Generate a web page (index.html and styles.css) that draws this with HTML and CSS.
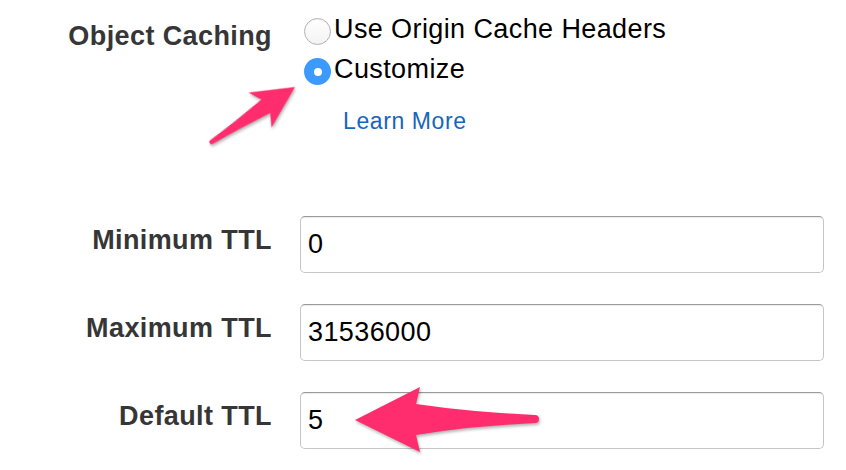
FILE: index.html
```html
<!DOCTYPE html>
<html lang="en">
<head>
<meta charset="utf-8">
<title>Object Caching</title>
<link rel="stylesheet" href="styles.css">
</head>
<body>
<form class="form">
  <div class="row row-caching">
    <div class="label label-caching">Object Caching</div>
    <div class="control">
      <label class="radio"><span class="radio-circle"></span><span class="radio-text">Use Origin Cache Headers</span></label>
      <label class="radio"><span class="radio-circle checked"></span><span class="radio-text">Customize</span></label>
      <a class="learn" href="#">Learn More</a>
    </div>
  </div>
  <div class="row row-field first-field">
    <div class="label label-field">Minimum TTL</div>
    <div class="control"><input class="field" type="text" value="0"></div>
  </div>
  <div class="row row-field">
    <div class="label label-field">Maximum TTL</div>
    <div class="control"><input class="field" type="text" value="31536000"></div>
  </div>
  <div class="row row-field">
    <div class="label label-field">Default TTL</div>
    <div class="control"><input class="field" type="text" value="5"></div>
  </div>
</form>
<svg class="annotations" width="846" height="470" viewBox="0 0 846 470" aria-hidden="true">
  <g class="arrow">
    <path transform="translate(295,87) rotate(-33.4)" d="M0 0 L-42 -21 L-35 -8 Q-70 -4 -100 -2.2 A2.2 2.2 0 0 0 -100 2.2 Q-70 4 -35 8 L-42 21 Z"/>
    <path d="M355 420 L420 387 L416 404 Q470 412 535 415 A4 4 0 0 1 535 423 Q470 426 416 435 L420 452 Z"/>
  </g>
</svg>
</body>
</html>
```

FILE: styles.css
```css
html, body {
  margin: 0;
  padding: 0;
  background: #ffffff;
}

body {
  width: 846px;
  height: 470px;
  overflow: hidden;
  position: relative;
  font-family: "Liberation Sans", Arial, Helvetica, sans-serif;
}

.form {
  display: flex;
  flex-direction: column;
  padding-top: 18px;
}

.row {
  display: grid;
  grid-template-columns: 272px 524px;
  column-gap: 28px;
}

.first-field {
  margin-top: 82px;
}

.row-field + .row-field {
  margin-top: 31px;
}

.label {
  text-align: right;
  font-weight: bold;
  font-size: 27px;
  line-height: 30px;
  letter-spacing: 0.4px;
  color: #363636;
}

.label-caching {
  padding-top: 3px;
}

.label-field {
  padding-top: 9px;
}

.control {
  display: flex;
  flex-direction: column;
  align-items: flex-start;
}

.radio {
  display: flex;
  align-items: flex-start;
  gap: 3px;
  margin-left: 4px;
  height: 27px;
}

.radio + .radio {
  margin-top: 13px;
}

.radio-circle {
  width: 27px;
  height: 27px;
  box-sizing: border-box;
  border-radius: 50%;
  border: 1px solid #b2b2b2;
  background: linear-gradient(#ffffff, #f3f3f3);
  box-shadow: inset 0 1px 1px rgba(0, 0, 0, 0.06);
  position: relative;
  flex: none;
}

.radio-circle.checked {
  border: none;
  background: #3c9afc;
  box-shadow: none;
}

.radio-circle.checked::after {
  content: "";
  position: absolute;
  left: 9.5px;
  top: 9.5px;
  width: 8px;
  height: 8px;
  border-radius: 50%;
  background: #ffffff;
}

.radio-text {
  font-size: 27px;
  line-height: 23px;
  letter-spacing: 0.4px;
  color: #000000;
  white-space: nowrap;
}

.learn {
  display: block;
  margin-top: 23px;
  margin-left: 43px;
  font-size: 23px;
  line-height: 26px;
  letter-spacing: 0.6px;
  color: #1766b9;
  text-decoration: none;
}

.field {
  display: block;
  box-sizing: border-box;
  width: 524px;
  height: 57px;
  margin: 0;
  padding: 0 7px;
  border: 1px solid #c6c6c6;
  border-top-color: #9a9a9a;
  border-radius: 5px;
  box-shadow: inset 0 1px 1px rgba(0, 0, 0, 0.08);
  background: #ffffff;
  font-family: "Liberation Sans", Arial, Helvetica, sans-serif;
  font-size: 27px;
  letter-spacing: 0.4px;
  color: #000000;
  outline: none;
}

.annotations {
  position: absolute;
  left: 0;
  top: 0;
  pointer-events: none;
}

.arrow {
  fill: #ff2d6e;
  filter: drop-shadow(1px 2px 1.5px rgba(0, 0, 0, 0.3));
}
```
